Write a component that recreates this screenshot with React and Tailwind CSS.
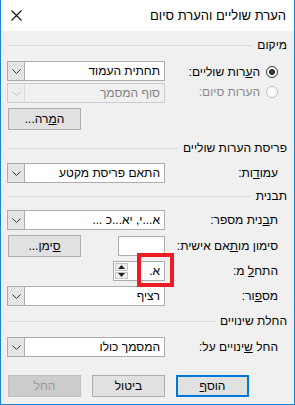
import React from 'react';

const Chevron = ({ color = '#333' }) => (
  <svg width="9" height="5" viewBox="0 0 9 5">
    <path d="M0.5 0.5 L4.5 4.5 L8.5 0.5" fill="none" stroke={color} strokeWidth="1" />
  </svg>
);

const Combo = ({ value, disabled }) => (
  <div
    className={`flex h-5 w-[158px] items-stretch border ${
      disabled ? 'border-[#cccccc] bg-[#f0f0f0] text-[#838383]' : 'border-[#acacac] bg-white text-black'
    }`}
  >
    <div className="flex-1 truncate pr-[4px] text-right leading-[18px]">{value}</div>
    <div
      className={`flex w-[17px] items-center justify-center border-r ${
        disabled ? 'border-[#d9d9d9] bg-[#eeeeee]' : 'border-[#acacac] bg-[#e5e5e5]'
      }`}
    >
      <Chevron color={disabled ? '#c2c2c2' : '#333'} />
    </div>
  </div>
);

const Button = ({ children, primary, disabled }) => (
  <button
    className={`h-[22px] w-[73px] text-center leading-none ${
      primary
        ? 'border-2 border-[#0078d7] bg-[#e1e1e1] text-black'
        : disabled
        ? 'border border-[#bfbfbf] bg-[#cccccc] text-[#9a9a9a]'
        : 'border border-[#adadad] bg-[#e1e1e1] text-black'
    }`}
  >
    {children}
  </button>
);

const Header = ({ children, className = '' }) => (
  <div className={`flex h-[14px] items-center gap-[5px] pr-[7px] ${className}`}>
    <span className="whitespace-nowrap leading-none">{children}</span>
    <div className="h-px flex-1 bg-[#dcdcdc]" />
  </div>
);

const Row = ({ label, children, className = '' }) => (
  <div className={`flex items-center pr-[16px] ${className}`}>
    <div className="flex-1 whitespace-nowrap text-right">{label}</div>
    <div className="w-[158px]">{children}</div>
  </div>
);

const Radio = ({ checked, disabled }) => (
  <span
    className={`flex h-[12px] w-[12px] items-center justify-center rounded-full border ${
      disabled ? 'border-[#bcbcbc] bg-white' : 'border-[#333] bg-white'
    }`}
  >
    {checked && <span className="h-[6px] w-[6px] rounded-full bg-[#333]" />}
  </span>
);

export default function App() {
  return (
    <div
      dir="rtl"
      className="relative h-[405px] w-[295px] overflow-hidden border-x border-b border-[#1883d7] bg-[#f0f0f0] text-[12px] text-black"
      style={{ fontFamily: '"Liberation Sans", "DejaVu Sans", sans-serif' }}
    >
      {/* title bar */}
      <div className="flex h-[31px] items-center justify-between bg-white pr-[8px] pl-[10px]">
        <span className="text-[13px] leading-none">הערת שוליים והערת סיום</span>
        <svg width="11" height="11" viewBox="0 0 11 11">
          <path d="M0.5 0.5 L10.5 10.5 M10.5 0.5 L0.5 10.5" stroke="#111" strokeWidth="1.1" />
        </svg>
      </div>

      <div className="pl-[6px]">
        <Header className="mt-[7px]">מיקום</Header>

        <Row
          className="mt-[9px]"
          label={
            <span className="inline-flex items-center gap-[6px]">
              <Radio checked />
              <span>
                ה<u>ע</u>רות שוליים:
              </span>
            </span>
          }
        >
          <Combo value="תחתית העמוד" />
        </Row>

        <Row
          className="mt-[2px]"
          label={
            <span className="inline-flex items-center gap-[6px] text-[#8a8a8a]">
              <Radio disabled />
              <span>הערות סיום:</span>
            </span>
          }
        >
          <Combo value="סוף המסמך" disabled />
        </Row>

        <div className="mt-[5px] flex justify-end pl-[1px]">
          <Button>
            ה<u>מ</u>רה...
          </Button>
        </div>

        <Header className="mt-[11px]">פריסת הערות שוליים</Header>

        <Row
          className="mt-[8px]"
          label={
            <span>
              עמו<u>ד</u>ות:
            </span>
          }
        >
          <Combo value="התאם פריסת מקטע" />
        </Row>

        <Header className="mt-[6px]">תבנית</Header>

        <Row
          className="mt-[7px]"
          label={
            <span>
              ת<u>ב</u>נית מספר:
            </span>
          }
        >
          <Combo value="א...י, יא...כ ..." />
        </Row>

        <Row
          className="mt-[5px]"
          label={
            <span>
              סימון מו<u>ת</u>אם אישית:
            </span>
          }
        >
          <div className="flex items-center justify-between">
            <div className="h-5 w-[47px] border border-[#acacac] bg-white" />
            <div className="pl-[1px]">
              <Button>
                <u>ס</u>ימן...
              </Button>
            </div>
          </div>
        </Row>

        <Row
          className="mt-[4px]"
          label={
            <span>
              התח<u>ל</u> מ:
            </span>
          }
        >
          <div className="flex h-5 w-[52px] border border-[#acacac] bg-white">
            <div className="flex-1 pr-[4px] text-right leading-[18px]">א.</div>
            <div className="flex w-[15px] flex-col gap-px p-px">
              <div className="flex flex-1 items-center justify-center border border-[#c5c5c5] bg-[#f0f0f0]">
                <svg width="7" height="4" viewBox="0 0 7 4">
                  <path d="M0 4 L3.5 0 L7 4 Z" fill="#222" />
                </svg>
              </div>
              <div className="flex flex-1 items-center justify-center border border-[#c5c5c5] bg-[#f0f0f0]">
                <svg width="7" height="4" viewBox="0 0 7 4">
                  <path d="M0 0 L3.5 4 L7 0 Z" fill="#222" />
                </svg>
              </div>
            </div>
          </div>
        </Row>

        <Row
          className="mt-[5px]"
          label={
            <span>
              מס<u>פ</u>ור:
            </span>
          }
        >
          <Combo value="רציף" />
        </Row>

        <Header className="mt-[8px]">החלת שינויים</Header>

        <Row
          className="mt-[9px]"
          label={
            <span>
              החל <u>ש</u>ינויים על:
            </span>
          }
        >
          <Combo value="המסמך כולו" />
        </Row>

        <div className="mt-[18px] flex justify-end gap-[11px] pl-[1px]">
          <Button primary>
            הוס<u>ף</u>
          </Button>
          <Button>ביטול</Button>
          <Button disabled>החל</Button>
        </div>
      </div>

      {/* highlight annotation */}
      <div className="pointer-events-none absolute left-[136px] top-[253px] h-[34px] w-[37px] border-4 border-[#ed1c24]" />
    </div>
  );
}
